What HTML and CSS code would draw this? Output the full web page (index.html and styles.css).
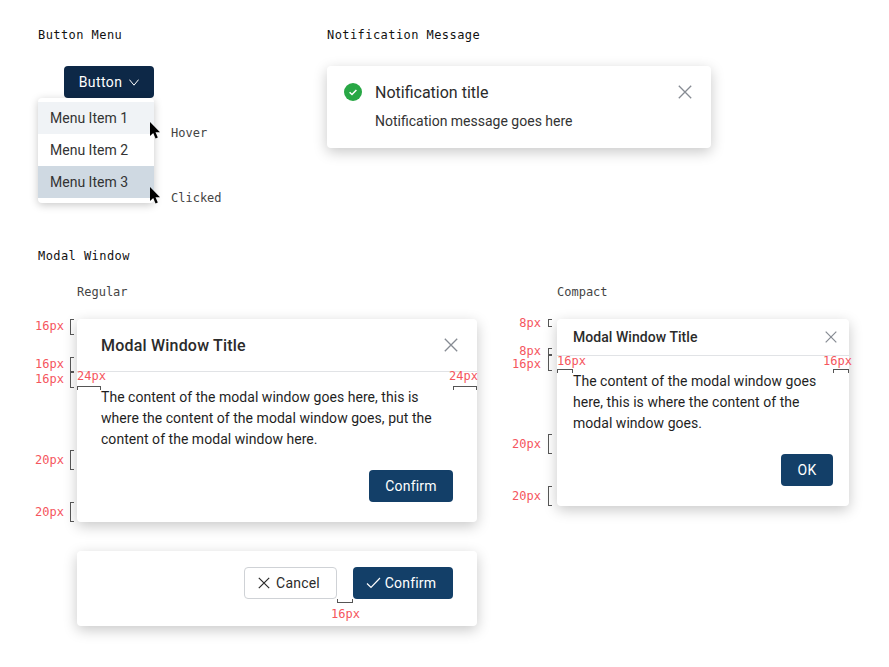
FILE: index.html
```html
<!DOCTYPE html>
<html lang="en">
<head>
<meta charset="utf-8">
<title>Component specs</title>
<link rel="stylesheet" href="styles.css">
</head>
<body>
<main class="page">
  <section class="top-row">
    <div class="col-menu">
      <h2 class="heading">Button Menu</h2>
      <div class="menu-demo">
        <button class="btn btn-navy btn-menu">Button
          <svg class="icon-chevron" viewBox="0 0 10 7" width="10" height="7"><path d="M.4.6 5 6.2 9.6.6" fill="none" stroke="#fff" stroke-width="1"/></svg>
        </button>
        <ul class="menu">
          <li class="menu-item hover">Menu Item 1</li>
          <li class="menu-item">Menu Item 2</li>
          <li class="menu-item clicked">Menu Item 3</li>
        </ul>
        <svg class="cursor cursor-hover" viewBox="0 0 12 17" width="12" height="17"><path d="M1 0 1 14 4.2 11 6.6 16.4 8.8 15.4 6.5 10.2 11 10.2Z" fill="#000"/></svg>
        <svg class="cursor cursor-clicked" viewBox="0 0 12 17" width="12" height="17"><path d="M1 0 1 14 4.2 11 6.6 16.4 8.8 15.4 6.5 10.2 11 10.2Z" fill="#000"/></svg>
        <span class="caption state-hover">Hover</span>
        <span class="caption state-clicked">Clicked</span>
      </div>
    </div>
    <div class="col-note">
      <h2 class="heading">Notification Message</h2>
      <div class="card note">
        <div class="note-head">
          <svg class="note-icon" viewBox="0 0 18 18" width="18" height="18"><circle cx="9" cy="9" r="9" fill="#28a745"/><path d="M5.6 9.2 8 11.5 12.4 6.9" fill="none" stroke="#fff" stroke-width="1.5"/></svg>
          <span class="note-title">Notification title</span>
          <svg class="close" viewBox="0 0 14 14" width="14" height="14"><path d="M.8.8 13.2 13.2M13.2.8.8 13.2" stroke="#868b93" stroke-width="1.3" fill="none"/></svg>
        </div>
        <p class="note-text">Notification message goes here</p>
      </div>
    </div>
  </section>

  <h2 class="heading heading-modal">Modal Window</h2>

  <section class="modal-row">
    <div class="col-regular">
      <div class="caption-row">Regular</div>
      <div class="card modal regular">
        <header class="modal-head">
          <h3 class="modal-title">Modal Window Title</h3>
          <svg class="close" viewBox="0 0 14 14" width="14" height="14"><path d="M.8.8 13.2 13.2M13.2.8.8 13.2" stroke="#868b93" stroke-width="1.3" fill="none"/></svg>
        </header>
        <p class="modal-body">The content of the modal window goes here, this is where the content of the modal window goes, put the content of the modal window here.</p>
        <div class="modal-foot"><button class="btn btn-blue btn-confirm">Confirm</button></div>

        <span class="mark mark-v r1"></span><span class="size sl r1l">16px</span>
        <span class="mark mark-v r2"></span><span class="size sl r2l">16px</span>
        <span class="mark mark-v r3"></span><span class="size sl r3l">16px</span>
        <span class="mark mark-v r4"></span><span class="size sl r4l">20px</span>
        <span class="mark mark-v r5"></span><span class="size sl r5l">20px</span>
        <span class="mark mark-h r6"></span><span class="size r6l">24px</span>
        <span class="mark mark-h r7"></span><span class="size r7l">24px</span>
      </div>
      <div class="card action-bar">
        <button class="btn btn-outline">
          <svg viewBox="0 0 12 12" width="12" height="12"><path d="M.8.8 11.2 11.2M11.2.8.8 11.2" stroke="#2b2b2b" stroke-width="1.2" fill="none"/></svg>Cancel
        </button>
        <button class="btn btn-blue btn-check">
          <svg viewBox="0 0 15 12" width="15" height="12"><path d="M1 6.5 5 10.5 14 1" stroke="#fff" stroke-width="1.2" fill="none"/></svg>Confirm
        </button>
        <span class="mark mark-u a1"></span><span class="size a1l">16px</span>
      </div>
    </div>

    <div class="col-compact">
      <div class="caption-row">Compact</div>
      <div class="card modal compact">
        <header class="modal-head">
          <h3 class="modal-title">Modal Window Title</h3>
          <svg class="close" viewBox="0 0 14 14" width="12" height="12"><path d="M.8.8 13.2 13.2M13.2.8.8 13.2" stroke="#868b93" stroke-width="1.4" fill="none"/></svg>
        </header>
        <p class="modal-body">The content of the modal window goes here, this is where the content of the modal window goes.</p>
        <div class="modal-foot"><button class="btn btn-blue btn-ok">OK</button></div>

        <span class="mark mark-v c1"></span><span class="size sl c1l">8px</span>
        <span class="mark mark-v c2"></span><span class="size sl c2l">8px</span>
        <span class="mark mark-v c3"></span><span class="size sl c3l">16px</span>
        <span class="mark mark-v c4"></span><span class="size sl c4l">20px</span>
        <span class="mark mark-v c5"></span><span class="size sl c5l">20px</span>
        <span class="mark mark-h c6"></span><span class="size c6l">16px</span>
        <span class="mark mark-h c7"></span><span class="size c7l">16px</span>
      </div>
    </div>
  </section>
</main>
</body>
</html>
```

FILE: styles.css
```css
* { box-sizing: border-box; }
html, body { margin: 0; background: #fff; }
body { font-family: Roboto, "Liberation Sans", sans-serif; color: #2b2b2b; }
.page { padding: 27px 0 0 38px; width: 889px; height: 667px; overflow: hidden; }
h2, h3, p, ul { margin: 0; padding: 0; }

.heading, .caption, .caption-row, .size {
  font-family: "DejaVu Sans Mono", "Liberation Mono", monospace;
  font-size: 12px;
  line-height: 16px;
}
.heading { font-weight: 500; letter-spacing: .43px; color: #111; }
.caption, .caption-row { color: #444; }

.top-row { display: flex; }
.col-menu { width: 289px; }
.col-note { width: 384px; }

.menu-demo { position: relative; margin-top: 23px; width: 190px; }

.btn {
  display: inline-flex;
  align-items: center;
  justify-content: center;
  height: 32px;
  border: 0;
  border-radius: 4px;
  font-family: inherit;
  font-size: 14px;
  letter-spacing: .2px;
  padding: 0;
}
.btn-navy { background: #0d2847; color: #fff; }
.btn-blue { background: #133f68; color: #fff; }
.btn-menu { display: flex; gap: 7px; width: 90px; margin-left: 26px; letter-spacing: .4px; }
.btn-outline { width: 93px; background: #fff; border: 1px solid #cfd2d6; color: #2b2b2b; gap: 6px; padding-right: 3px; }
.btn-confirm { width: 84px; }
.btn-ok { width: 52px; }
.btn-check { width: 100px; gap: 4px; padding-right: 4px; letter-spacing: .2px; }

.menu {
  list-style: none;
  width: 116px;
  padding: 4px 0 5px;
  background: #fff;
  border-radius: 4px;
  box-shadow: 0 2px 8px rgba(0, 0, 0, .22);
}
.menu-item { height: 32px; line-height: 32px; padding-left: 12px; font-size: 14px; color: #333; }
.menu-item.hover { background: #f0f3f6; }
.menu-item.clicked { background: #cfd9e2; }

.cursor { position: absolute; left: 111px; }
.cursor-hover { top: 56px; }
.cursor-clicked { top: 121px; }
.state-hover { position: absolute; left: 133px; top: 59px; }
.state-clicked { position: absolute; left: 133px; top: 124px; }

.card {
  background: #fff;
  border-radius: 4px;
  box-shadow: 0 4px 14px rgba(0, 0, 0, .22);
}

.note { margin-top: 23px; height: 82px; padding: 15px 19px 0 17px; }
.note-head { display: flex; align-items: center; height: 22px; }
.note-icon { flex: none; }
.note-title { flex: 1; margin-left: 13px; font-size: 16px; color: #2b2b2b; }
.note-text { margin: 8px 0 0 31px; font-size: 14px; line-height: 20px; color: #333; }
.close { flex: none; }

.heading-modal { margin-top: 45px; }

.modal-row { display: flex; gap: 80px; margin: 20px 0 0 39px; }
.col-regular { width: 400px; }
.col-compact { width: 292px; }

.caption-row { height: 16px; margin-bottom: 19px; }

.modal { position: relative; }
.regular { height: 203px; }
.compact { height: 187px; }

.modal-head {
  display: flex;
  align-items: center;
  justify-content: space-between;
  border-bottom: 1px solid #e1e3e6;
}
.regular .modal-head { height: 53px; padding: 0 19px 0 24px; }
.compact .modal-head { height: 37px; padding: 0 12px 0 16px; }
.modal-title { font-weight: 500; color: #2b2b2b; }
.regular .modal-title { font-size: 16px; letter-spacing: .2px; }
.compact .modal-title { font-size: 14px; letter-spacing: .05px; }

.modal-body { font-size: 14px; line-height: 21px; color: #1f1f1f; letter-spacing: .035px; }
.regular .modal-body { padding: 15px 24px 0; }
.compact .modal-body { padding: 15px 16px 0; }

.modal-foot { display: flex; justify-content: flex-end; margin-top: 20px; }
.regular .modal-foot { padding-right: 24px; }
.compact .modal-foot { padding-right: 16px; }

.action-bar {
  position: relative;
  display: flex;
  justify-content: flex-end;
  gap: 16px;
  height: 75px;
  margin-top: 29px;
  padding: 16px 24px 0 0;
}

/* spec annotations, laid over the cards */
.size { position: absolute; color: #f5555d; white-space: nowrap; line-height: 14px; }
.sl { right: 100%; margin-right: 13px; }
.mark { position: absolute; border: 1px solid #555; }
.mark-v { left: -7px; width: 4px; border-right: 0; }
.mark-h { height: 4px; border-bottom: 0; }
.mark-u { height: 4px; border-top: 0; }

.r1 { top: 0; height: 16px; }    .r1l { top: 0; }
.r2 { top: 38px; height: 15px; } .r2l { top: 38px; }
.r3 { top: 53px; height: 16px; } .r3l { top: 53px; }
.r4 { top: 131px; height: 20px; } .r4l { top: 134px; }
.r5 { top: 183px; height: 20px; } .r5l { top: 186px; }
.r6 { top: 67px; left: 0; width: 24px; } .r6l { top: 50px; left: 0; }
.r7 { top: 67px; right: 0; width: 24px; } .r7l { top: 50px; right: -1px; }

.c1 { top: 0; height: 8px; left: -9px; }    .c1l { top: -3px; }
.c2 { top: 29px; height: 7px; left: -9px; } .c2l { top: 25px; }
.c3 { top: 36px; height: 16px; left: -9px; } .c3l { top: 38px; }
.c4 { top: 115px; height: 20px; left: -9px; } .c4l { top: 118px; }
.c5 { top: 167px; height: 20px; left: -9px; } .c5l { top: 170px; }
.sl.c1l, .sl.c2l, .sl.c3l, .sl.c4l, .sl.c5l { margin-right: 16px; }
.c6 { top: 50px; left: 0; width: 16px; } .c6l { top: 35px; left: 0; }
.c7 { top: 50px; right: 0; width: 16px; } .c7l { top: 35px; right: -3px; }

.a1 { top: 48px; left: 260px; width: 16px; } .a1l { top: 56px; left: 254px; }
```
